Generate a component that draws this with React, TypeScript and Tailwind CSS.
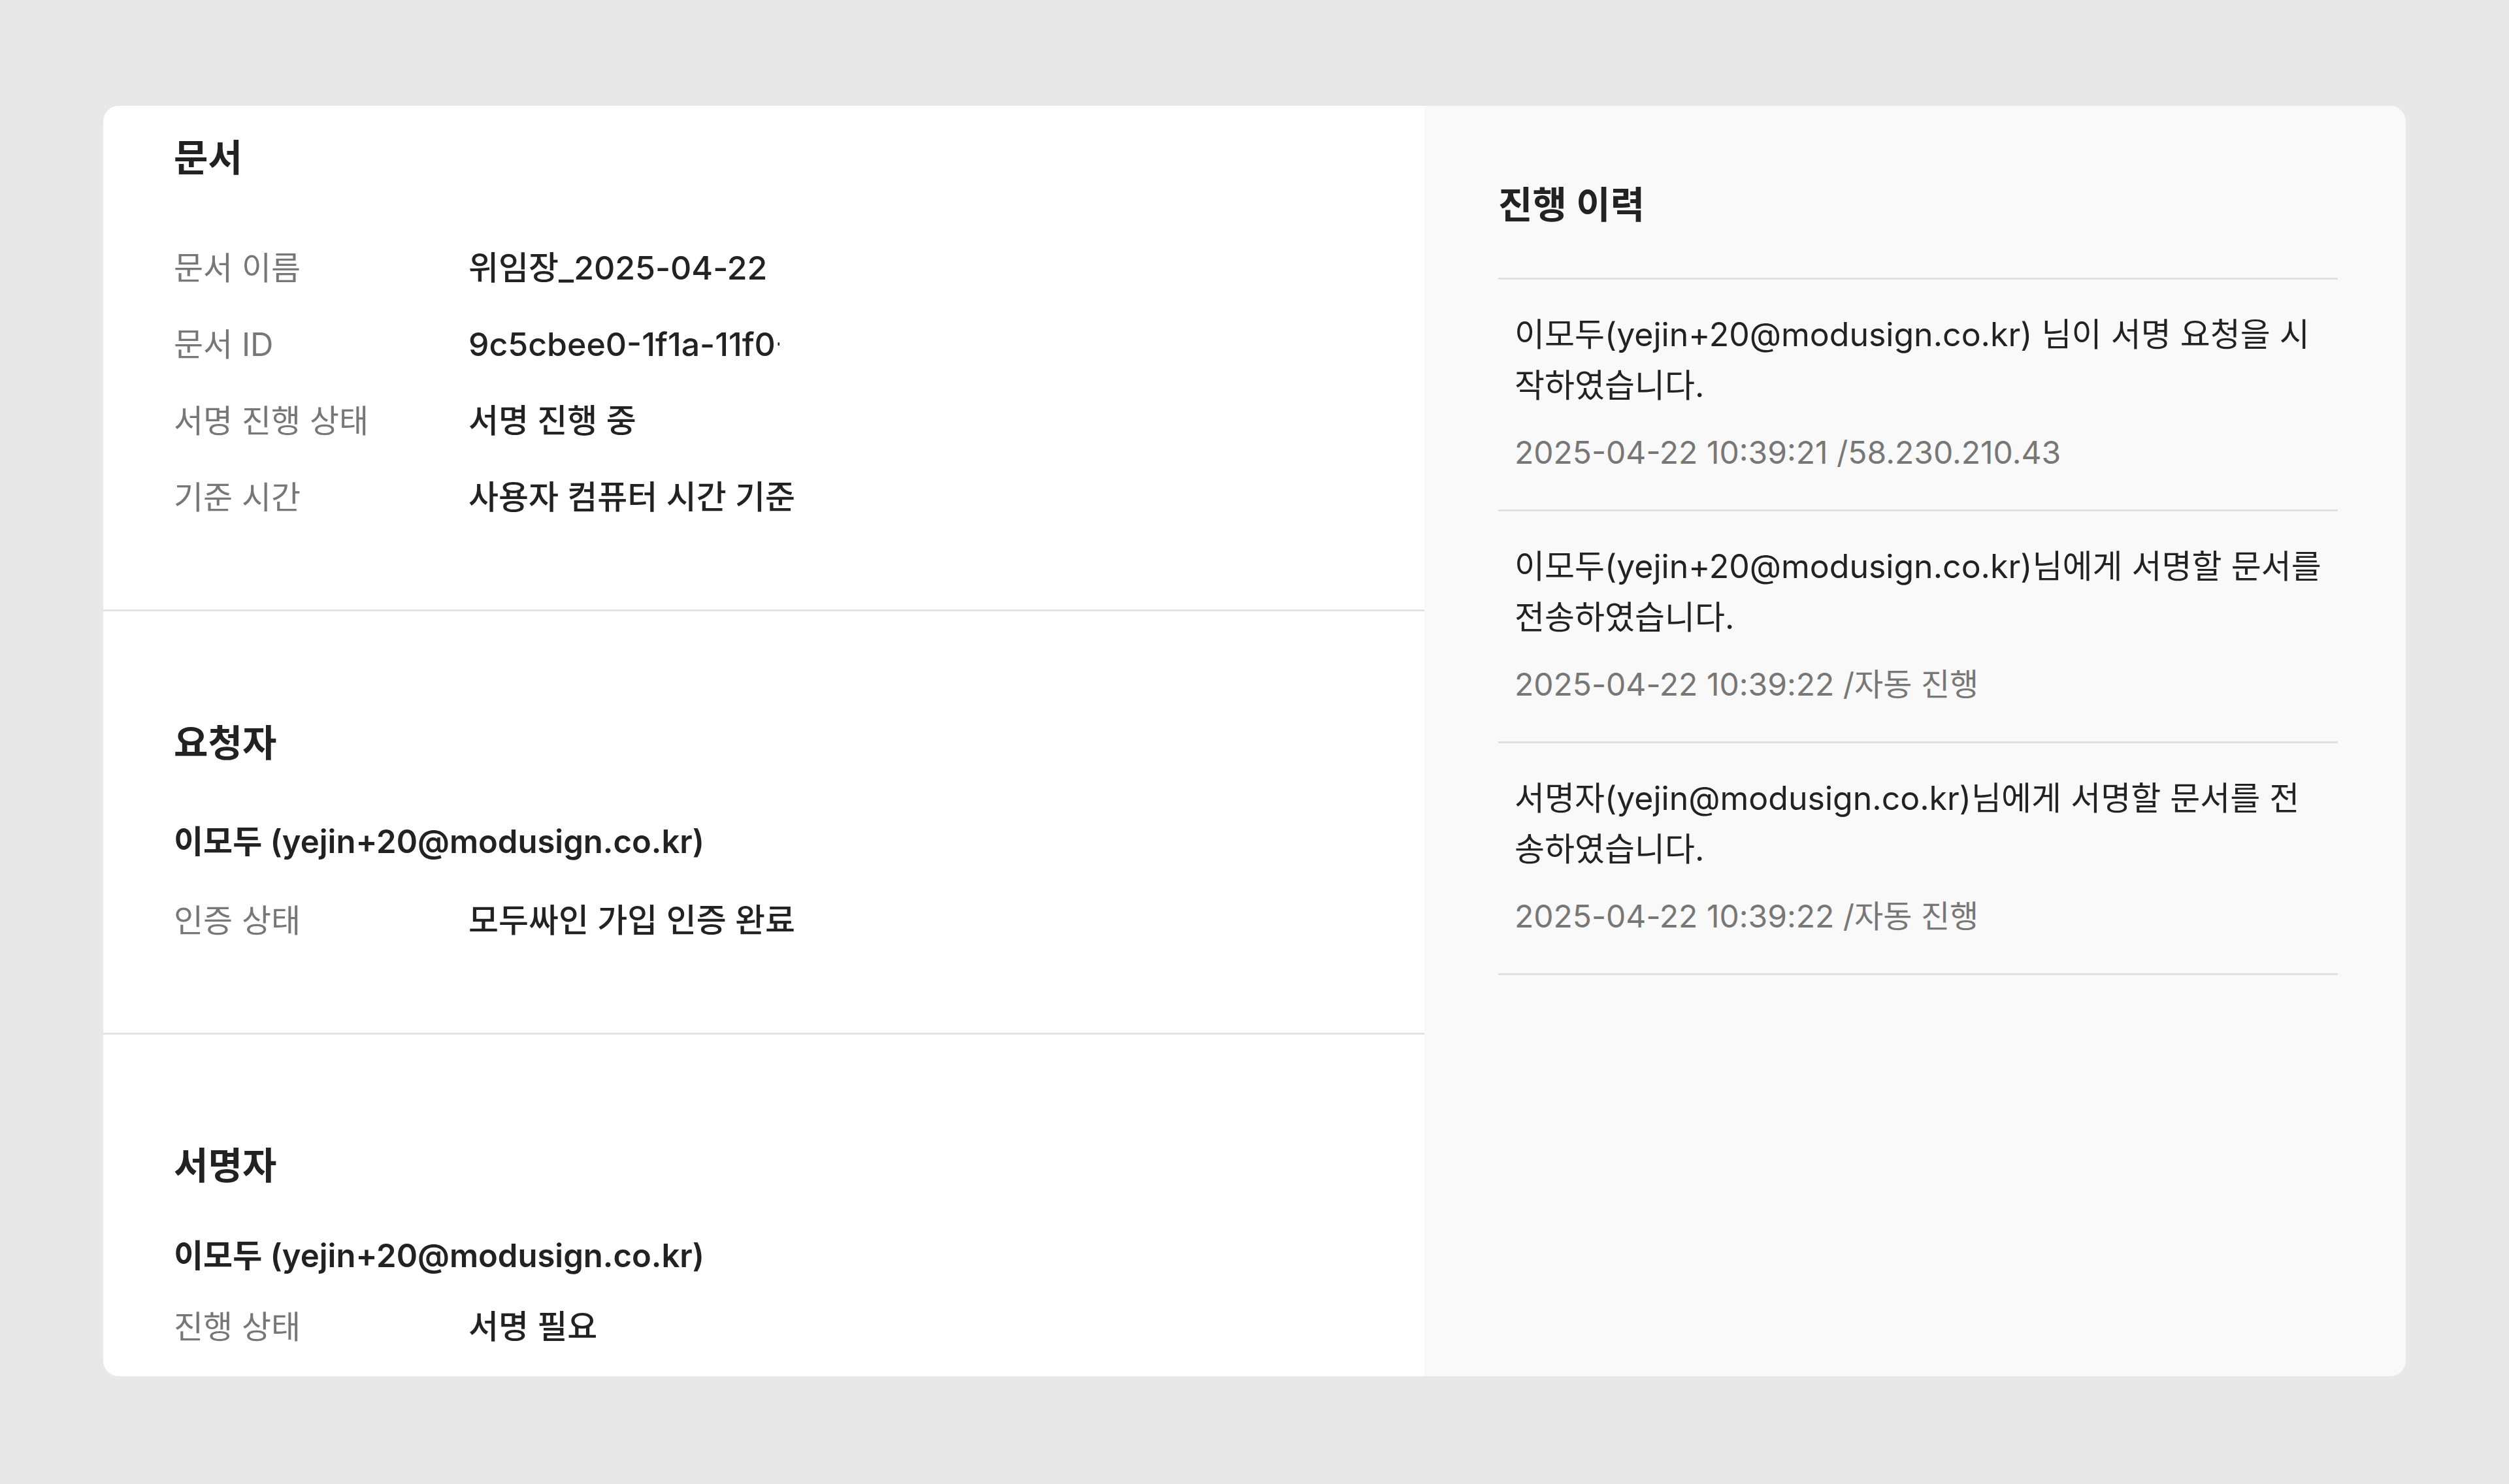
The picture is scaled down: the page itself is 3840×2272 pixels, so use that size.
const font = { fontFamily: '"Inter", "Noto Sans CJK KR", sans-serif' }

type Row = { label: string; value: string; clip?: boolean }

const docRows: Row[] = [
  { label: "문서 이름", value: "위임장_2025-04-22" },
  { label: "문서 ID", value: "9c5cbee0-1f1a-11f0-9b1e-0a58a9feac02", clip: true },
  { label: "서명 진행 상태", value: "서명 진행 중" },
  { label: "기준 시간", value: "사용자 컴퓨터 시간 기준" },
]

// lines are kept as in the product: the log text wraps at these points
const history = [
  {
    lines: ["이모두(yejin+20@modusign.co.kr) 님이 서명 요청을 시", "작하였습니다."],
    meta: "2025-04-22 10:39:21 /58.230.210.43",
  },
  {
    lines: ["이모두(yejin+20@modusign.co.kr)님에게 서명할 문서를", "전송하였습니다."],
    meta: "2025-04-22 10:39:22 /자동 진행",
  },
  {
    lines: ["서명자(yejin@modusign.co.kr)님에게 서명할 문서를 전", "송하였습니다."],
    meta: "2025-04-22 10:39:22 /자동 진행",
  },
]

function InfoRow({ label, value, clip }: Row) {
  return (
    <div className="flex h-[117px] items-center">
      <div className="w-[451px] shrink-0 text-[49px] text-[#777777]">{label}</div>
      <div
        className={
          clip
            ? "w-[476px] overflow-hidden whitespace-nowrap text-[50px] font-medium text-[#222222]"
            : "text-[50px] font-medium text-[#222222]"
        }
      >
        {value}
      </div>
    </div>
  )
}

function SectionTitle({ children }: { children: React.ReactNode }) {
  return <h2 className="text-[57px] leading-[80px] font-semibold text-[#222222]">{children}</h2>
}

export default function App() {
  return (
    <div className="min-h-[2272px] w-full bg-[#e8e8e8] px-[158px] pt-[162px]" style={font}>
      <div className="flex h-[1945px] overflow-hidden rounded-[24px]">

        {/* left: document / requester / signer */}
        <div className="w-[2022px] shrink-0 overflow-hidden bg-white">

          <section className="border-b-[3px] border-[#e3e3e3] pl-[108px] pt-[40px] pb-[113px]">
            <SectionTitle>문서</SectionTitle>
            <div className="mt-[70px]">
              {docRows.map((r) => (
                <InfoRow key={r.label} {...r} />
              ))}
            </div>
          </section>

          <section className="border-b-[3px] border-[#e3e3e3] pl-[108px] pt-[162px] pb-[113px]">
            <SectionTitle>요청자</SectionTitle>
            <div className="mt-[71px] text-[49px] leading-[80px] font-semibold text-[#222222]">
              이모두 (yejin+20@modusign.co.kr)
            </div>
            <div className="mt-[22px]">
              <InfoRow label="인증 상태" value="모두싸인 가입 인증 완료" />
            </div>
          </section>

          <section className="pl-[108px] pt-[161px]">
            <SectionTitle>서명자</SectionTitle>
            <div className="mt-[58px] text-[49px] leading-[80px] font-semibold text-[#222222]">
              이모두 (yejin+20@modusign.co.kr)
            </div>
            <div className="mt-[10px]">
              <InfoRow label="진행 상태" value="서명 필요" />
            </div>
          </section>
        </div>

        {/* right: history */}
        <div className="flex-1 bg-[#f9f9f9] pl-[113px] pr-[107px] pt-[112px]">
          <SectionTitle>진행 이력</SectionTitle>
          <ul className="mt-[71px] border-t-[3px] border-[#e0e0e0]">
            {history.map((h, i) => (
              <li key={i} className="border-b-[3px] border-[#e0e0e0] px-[25px] pt-[45px] pb-[57px]">
                <p className="text-[50px] leading-[78px] text-[#222222]">
                  {h.lines.map((l) => (
                    <span key={l} className="block whitespace-nowrap">{l}</span>
                  ))}
                </p>
                <p className="mt-[34px] text-[48px] leading-[60px] text-[#777777]">{h.meta}</p>
              </li>
            ))}
          </ul>
        </div>

      </div>
    </div>
  )
}
